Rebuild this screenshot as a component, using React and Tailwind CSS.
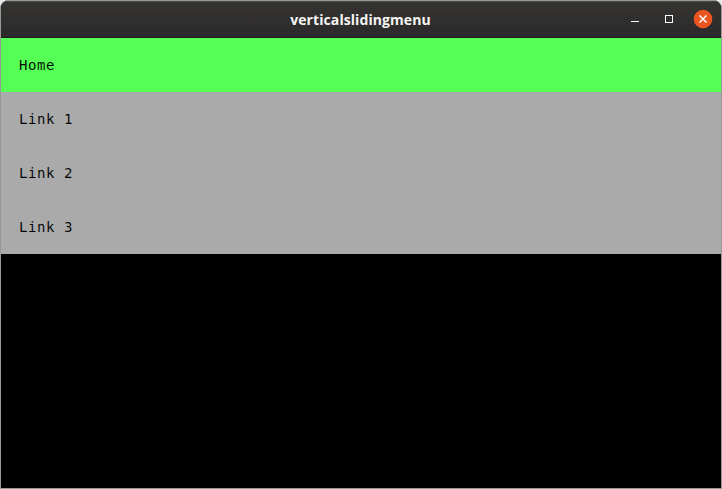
const items = ['Home', 'Link 1', 'Link 2', 'Link 3'];

export default function App() {
  return (
    <div className="h-[489px] w-[722px] bg-[#e8e8e8]">
      <div className="flex h-full w-full flex-col overflow-hidden rounded-t-[8px] border border-[#989896] bg-black">
        <header className="grid h-[37px] shrink-0 grid-cols-[1fr_auto_1fr] items-center border-t border-b border-t-[#484744] border-b-[#1f1e1e] bg-gradient-to-b from-[#353432] to-[#2b292a]">
          <span />
          <h1 className="mr-px font-['Open_Sans','Noto_Sans',sans-serif] text-[14px] leading-none font-bold tracking-[0.08px] text-[#f5f5f3]">verticalslidingmenu</h1>
          <div className="flex justify-end pr-[7px]">
            <svg className="mb-px" width="84" height="20" viewBox="0 0 84 20" fill="none">
              <path d="M1 12.5h8" stroke="#fff" />
              <rect x="35.5" y="6.5" width="7" height="7" stroke="#fff" />
              <circle cx="73" cy="10" r="9.3" fill="#e95420" />
              <path d="m69.5 6.5 7 7m0-7-7 7" stroke="#fff" strokeWidth="1.5" />
            </svg>
          </div>
        </header>
        <nav>
          {items.map((item, i) => (
            <a key={item} className={`flex h-[54px] items-center pb-px pl-[18px] font-['DejaVu_Sans_Mono',monospace] text-[14px] leading-none tracking-[0.57px] whitespace-pre text-black ${i === 0 ? 'bg-[#55ff55] [-webkit-text-stroke:0.1px_#55ff55]' : 'bg-[#aaaaaa] [-webkit-text-stroke:0.1px_#aaaaaa]'}`}>
              {item}
            </a>
          ))}
        </nav>
      </div>
    </div>
  );
}
